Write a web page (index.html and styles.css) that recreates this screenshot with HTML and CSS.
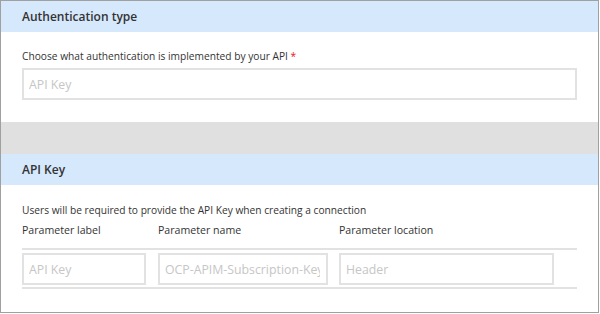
FILE: index.html
```html
<!DOCTYPE html>
<html lang="en">

<head>
  <meta charset="UTF-8">
  <title>Authentication type</title>
  <link rel="stylesheet" href="styles.css">
</head>

<body>
  <div id="frame">
    <div class="sectionHead">Authentication type</div>
    <div class="sectionBody authBody">
      <div class="fieldLabel">Choose what authentication is implemented by your API <span class="required">*</span></div>
      <input class="textBox wide" type="text" placeholder="API Key" />
    </div>

    <div class="spacer"></div>

    <div class="sectionHead">API Key</div>
    <div class="sectionBody keyBody">
      <div class="fieldLabel">Users will be required to provide the API Key when creating a connection</div>
      <div class="paramRow paramLabels">
        <div class="colLabel">Parameter label</div>
        <div class="colName">Parameter name</div>
        <div class="colLocation">Parameter location</div>
      </div>
      <div class="paramTable">
        <div class="paramRow">
          <input class="textBox colLabel" type="text" placeholder="API Key" />
          <input class="textBox colName" type="text" placeholder="OCP-APIM-Subscription-Key" />
          <input class="textBox colLocation" type="text" placeholder="Header" />
        </div>
      </div>
    </div>
  </div>
</body>

</html>
```

FILE: styles.css
```css
body {
  margin: 0px;
  background-color: #ffffff;
  font-family: "Open Sans", "Noto Sans", sans-serif;
  color: #333333;
}

#frame {
  box-sizing: border-box;
  width: 599px;
  height: 313px;
  border: 1px solid #a0a0a0;
  overflow: hidden;
}

.sectionHead {
  height: 31px;
  line-height: 31px;
  padding-left: 21px;
  background-color: #d6e8fc;
  font-size: 12px;
  font-weight: 600;
}

.sectionBody {
  padding: 0px 20px 0px 21px;
}

.authBody {
  height: 90px;
  padding-top: 17px;
  box-sizing: border-box;
}

.fieldLabel {
  font-size: 10.2px;
  line-height: 14px;
}

.required {
  color: #e81123;
}

.textBox {
  box-sizing: border-box;
  height: 32px;
  margin: 0px;
  padding: 0px 6px 0px 5px;
  border: 2px solid #e2e2e2;
  font-family: inherit;
  font-size: 12.3px;
  color: #333333;
  outline: none;
}

.textBox::placeholder {
  color: #c6c6c6;
}

.wide {
  display: block;
  width: 555px;
  margin-top: 5px;
}

.spacer {
  height: 32px;
  background-color: #e0e0e0;
}

.keyBody {
  padding-top: 18px;
}

.paramRow {
  display: flex;
  gap: 12px;
}

.paramLabels {
  margin-top: 6px;
  font-size: 10.6px;
  line-height: 14px;
}

.paramTable {
  width: 555px;
  margin-top: 11px;
  padding: 3px 0px 2px 0px;
  border-top: 2px solid #e2e2e2;
  border-bottom: 2px solid #e2e2e2;
}

.colLabel {
  width: 124px;
}

.colName {
  width: 170px;
}

.colLocation {
  width: 215px;
  margin-left: -1px;
}
```
